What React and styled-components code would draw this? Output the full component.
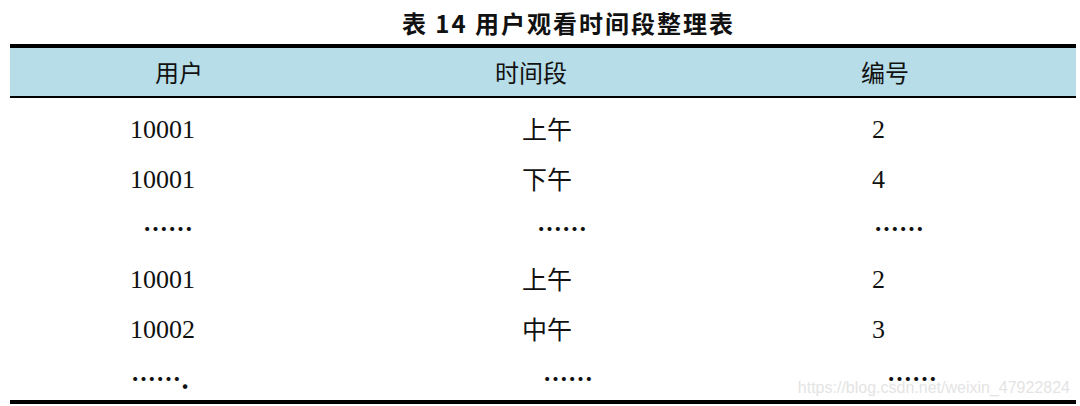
import React from 'react'
import styled, { createGlobalStyle } from 'styled-components'

const GlobalStyle = createGlobalStyle`
  html, body {
    margin: 0;
    padding: 0;
    background: #ffffff;
  }
  body {
    width: 1080px;
    height: 406px;
    overflow: hidden;
  }
`

const cjk = `"Noto Sans CJK SC", "Noto Sans", sans-serif`
const serif = `"Liberation Serif", "Noto Sans CJK SC", serif`

const header = [
  { text: '用户', x: 145 },
  { text: '时间段', x: 145 },
  { text: '编号', x: 151 },
]

// x = left offset of the text inside its column
const rows = [
  { h: 50, cells: [{ text: '10001', x: 120, kind: 'num' }, { text: '上午', x: 172 }, { text: '2', x: 162, kind: 'num' }] },
  { h: 50, cells: [{ text: '10001', x: 120, kind: 'num' }, { text: '下午', x: 172 }, { text: '4', x: 162, kind: 'num' }] },
  { h: 50, cells: [{ text: '……', x: 133, kind: 'dots' }, { text: '……', x: 187, kind: 'dots' }, { text: '……', x: 164, kind: 'dots' }] },
  { h: 50, cells: [{ text: '10001', x: 120, kind: 'num' }, { text: '上午', x: 172 }, { text: '2', x: 162, kind: 'num' }] },
  { h: 50, cells: [{ text: '10002', x: 120, kind: 'num' }, { text: '中午', x: 172 }, { text: '3', x: 162, kind: 'num' }] },
  { h: 47, cells: [{ text: '…….', x: 121, kind: 'dots' }, { text: '……', x: 193, kind: 'dots' }, { text: '……', x: 177, kind: 'dots' }] },
]

function App() {
  return (
    <Page>
      <GlobalStyle />
      <Caption>表 14 用户观看时间段整理表</Caption>
      <Table>
        <HeadRow>
          {header.map((h) => (
            <HeadCell key={h.text} $x={h.x}>{h.text}</HeadCell>
          ))}
        </HeadRow>
        <Body>
          {rows.map((r, i) => (
            <Row key={i} $h={r.h}>
              {r.cells.map((c, j) => (
                <Cell key={j} $x={c.x} $kind={c.kind}>{c.text}</Cell>
              ))}
            </Row>
          ))}
        </Body>
      </Table>
      <Watermark>https://blog.csdn.net/weixin_47922824</Watermark>
    </Page>
  )
}

const Page = styled.div`
  position: relative;
  width: 1080px;
  height: 406px;
  background: #fff;
`

const Caption = styled.div`
  height: 44px;
  display: flex;
  align-items: center;
  justify-content: center;
  padding-left: 57px;
  box-sizing: border-box;
  font-family: ${cjk};
  font-weight: 700;
  font-size: 24px;
  letter-spacing: 2px;
  color: #111;
  white-space: pre;
`

const Table = styled.div`
  margin: 0 4px 0 10px;
  border-top: 4px solid #000;
  border-bottom: 4px solid #000;
`

const Grid = styled.div`
  display: grid;
  grid-template-columns: 340px 360px 1fr;
`

const HeadRow = styled(Grid)`
  height: 48px;
  align-items: center;
  background: #b7dde8;
  border-bottom: 2px solid #000;
`

const HeadCell = styled.div`
  padding-left: ${(p) => p.$x}px;
  font-family: ${cjk};
  font-size: 24px;
  line-height: 48px;
  color: #111;
`

const Body = styled.div`
  padding-top: 5px;
`

const Row = styled(Grid)`
  height: ${(p) => p.$h}px;
  align-items: center;
`

const Cell = styled.div`
  padding-left: ${(p) => p.$x}px;
  padding-bottom: ${(p) => (p.$kind ? 0 : 4)}px;
  font-family: ${(p) => (p.$kind === 'num' ? serif : cjk)};
  font-weight: ${(p) => (p.$kind === 'dots' ? 700 : 400)};
  font-size: ${(p) => (p.$kind === 'num' ? 26 : 25)}px;
  line-height: 50px;
  color: #111;
  white-space: nowrap;
`

const Watermark = styled.div`
  position: absolute;
  right: 10px;
  top: 379px;
  font-family: "Liberation Sans", Arial, sans-serif;
  font-size: 16px;
  color: #e4e4e4;
  white-space: nowrap;
`

export default App
